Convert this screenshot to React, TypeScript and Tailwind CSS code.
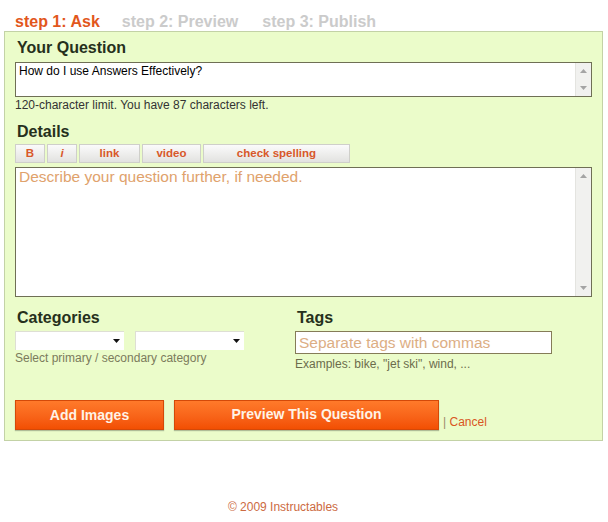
import React from 'react';

const ArrowUp = ({ color = '#a4a4a4' }: { color?: string }) => (
  <svg width="7" height="4" viewBox="0 0 7 4">
    <path d="M0 4 L3.5 0 L7 4 Z" fill={color} />
  </svg>
);

const ArrowDown = ({ color = '#a4a4a4' }: { color?: string }) => (
  <svg width="7" height="4" viewBox="0 0 7 4">
    <path d="M0 0 L7 0 L3.5 4 Z" fill={color} />
  </svg>
);

const Scrollbar = () => (
  <div className="w-[16px] flex-shrink-0 bg-[#f1f1ef] border-l border-[#e4e4e0] flex flex-col items-center justify-between py-[6px]">
    <ArrowUp />
    <ArrowDown />
  </div>
);

const Heading = ({ children }: { children: React.ReactNode }) => (
  <h2 className="h-[20px] leading-[20px] text-[16px] font-bold text-[#26301c] pl-[2px]">{children}</h2>
);

const toolButtons = [
  { label: 'B', width: 'w-[30px]', italic: false },
  { label: 'i', width: 'w-[30px]', italic: true },
  { label: 'link', width: 'w-[61px]', italic: false },
  { label: 'video', width: 'w-[59px]', italic: false },
  { label: 'check spelling', width: 'w-[147px]', italic: false },
];

const Select = () => (
  <div className="w-[109px] h-[19px] bg-white border-t border-l border-[#dedfd4] flex items-center justify-end pr-[4px]">
    <ArrowDown color="#111" />
  </div>
);

export default function App() {
  return (
    <div className="w-[608px] min-h-[522px] bg-white font-['Liberation_Sans',Arial,sans-serif]">
      {/* step tabs */}
      <div className="pt-[12px] pl-[15px] flex h-[31px] text-[16px] leading-[20px] font-bold">
        <span className="text-[#e2571c]">step 1: Ask</span>
        <span className="ml-[22px] text-[#cbcbcb]">step 2: Preview</span>
        <span className="ml-[24px] text-[#cbcbcb]">step 3: Publish</span>
      </div>

      <div className="ml-[4px] w-[599px] bg-[#ebfcca] border border-[#c3d2a6] px-[10px] pt-[6px] pb-[10px]">
        <Heading>Your Question</Heading>
        <div className="mt-[4px] h-[35px] bg-white border border-[#6f6f55] flex">
          <div className="flex-1 px-[3px] pt-[1px] text-[12px] leading-[14px] text-black">
            How do I use Answers Effectively?
          </div>
          <Scrollbar />
        </div>
        <p className="mt-[1px] text-[12px] leading-[14px] text-[#333]">
          120-character limit. You have 87 characters left.
        </p>

        <div className="mt-[10px]">
          <Heading>Details</Heading>
        </div>
        <div className="mt-[2px] flex gap-[2px] h-[19px]">
          {toolButtons.map((b) => (
            <div
              key={b.label}
              className={`${b.width} bg-linear-to-b from-[#fbfbfb] to-[#e2e2e0] border border-[#cfcfca] flex items-center justify-center text-[11.5px] font-bold text-[#d8582a] ${b.italic ? 'italic' : ''}`}
            >
              {b.label}
            </div>
          ))}
        </div>
        <div className="mt-[4px] h-[130px] bg-white border border-[#6f6f55] flex">
          <div className="flex-1 px-[3px] text-[15.5px] leading-[18px] text-[#e0a26c]">
            Describe your question further, if needed.
          </div>
          <Scrollbar />
        </div>

        <div className="mt-[11px] flex">
          <div className="w-[280px]">
            <Heading>Categories</Heading>
            <div className="mt-[3px] flex gap-[11px]">
              <Select />
              <Select />
            </div>
            <p className="mt-[1px] text-[12px] leading-[14px] text-[#7b7b5c]">
              Select primary / secondary category
            </p>
          </div>
          <div className="flex-1">
            <Heading>Tags</Heading>
            <div className="mt-[3px] w-[257px] h-[23px] bg-white border border-[#857c58] px-[3px] flex items-center text-[15.5px] text-[#dcae84]">
              Separate tags with commas
            </div>
            <p className="mt-[3px] text-[12px] leading-[14px] text-[#6c6c4c]">
              Examples: bike, "jet ski", wind, ...
            </p>
          </div>
        </div>

        <div className="mt-[29px] flex items-end">
          <button className="w-[149px] h-[30px] bg-linear-to-b from-[#ff7a2a] to-[#f24f02] border border-[#d44908] shadow-[0_1px_1px_rgba(0,0,0,0.25)] text-[14px] font-bold text-[#fff3e6]">
            Add Images
          </button>
          <button className="ml-[10px] w-[265px] h-[30px] bg-linear-to-b from-[#ff7a2a] to-[#f24f02] border border-[#d44908] shadow-[0_1px_1px_rgba(0,0,0,0.25)] text-[14px] font-bold text-[#fff3e6] pb-[2px]">
            Preview This Question
          </button>
          <span className="ml-[4px] mb-[1px] text-[12px] leading-[14px] text-[#d9561f]">
            <span className="text-[#9a8a6a]">|</span> Cancel
          </span>
        </div>
      </div>

      <div className="mt-[59px] w-[566px] flex justify-center text-[12px] leading-[14px] text-[#cc6a42]">
        © 2009 Instructables
      </div>
    </div>
  );
}
